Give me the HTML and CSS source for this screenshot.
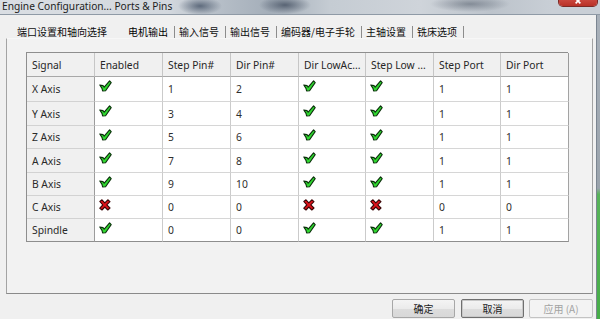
FILE: index.html
```html
<!DOCTYPE html>
<html lang="zh">
<head>
<meta charset="utf-8">
<title>Engine Configuration</title>
<link rel="stylesheet" href="styles.css">
</head>
<body>
<div class="window">
  <div class="titlebar">
    <span class="title">Engine Configuration... Ports &amp; Pins</span>
    <div class="close"><svg class="close-x" viewBox="0 0 10 10"><path d="M2 2 L8 8 M8 2 L2 8" stroke="#fff" stroke-width="2"/></svg></div>
  </div>
  <div class="main">
    <div class="dialog">
      <div class="tabs">
        <span class="tab first">端口设置和轴向选择</span>
        <span class="tab active">电机输出</span>
        <span class="tab">输入信号</span>
        <span class="tab">输出信号</span>
        <span class="tab">编码器/电子手轮</span>
        <span class="tab">主轴设置</span>
        <span class="tab">铣床选项</span>
      </div>
      <div class="panel">
        <div class="grid">
          <div class="hd">Signal</div><div class="hd">Enabled</div><div class="hd">Step Pin#</div><div class="hd">Dir Pin#</div><div class="hd">Dir LowAc...</div><div class="hd">Step Low ...</div><div class="hd">Step Port</div><div class="hd">Dir Port</div>

          <div class="sig">X Axis</div><div class="ic"><svg class="ok"><use href="#ok"/></svg></div><div class="c">1</div><div class="c">2</div><div class="ic"><svg class="ok"><use href="#ok"/></svg></div><div class="ic"><svg class="ok"><use href="#ok"/></svg></div><div class="c">1</div><div class="c">1</div>

          <div class="sig">Y Axis</div><div class="ic"><svg class="ok"><use href="#ok"/></svg></div><div class="c">3</div><div class="c">4</div><div class="ic"><svg class="ok"><use href="#ok"/></svg></div><div class="ic"><svg class="ok"><use href="#ok"/></svg></div><div class="c">1</div><div class="c">1</div>

          <div class="sig">Z Axis</div><div class="ic"><svg class="ok"><use href="#ok"/></svg></div><div class="c">5</div><div class="c">6</div><div class="ic"><svg class="ok"><use href="#ok"/></svg></div><div class="ic"><svg class="ok"><use href="#ok"/></svg></div><div class="c">1</div><div class="c">1</div>

          <div class="sig">A Axis</div><div class="ic"><svg class="ok"><use href="#ok"/></svg></div><div class="c">7</div><div class="c">8</div><div class="ic"><svg class="ok"><use href="#ok"/></svg></div><div class="ic"><svg class="ok"><use href="#ok"/></svg></div><div class="c">1</div><div class="c">1</div>

          <div class="sig">B Axis</div><div class="ic"><svg class="ok"><use href="#ok"/></svg></div><div class="c">9</div><div class="c">10</div><div class="ic"><svg class="ok"><use href="#ok"/></svg></div><div class="ic"><svg class="ok"><use href="#ok"/></svg></div><div class="c">1</div><div class="c">1</div>

          <div class="sig">C Axis</div><div class="ic"><svg class="no"><use href="#no"/></svg></div><div class="c">0</div><div class="c">0</div><div class="ic"><svg class="no"><use href="#no"/></svg></div><div class="ic"><svg class="no"><use href="#no"/></svg></div><div class="c">0</div><div class="c">0</div>

          <div class="sig">Spindle</div><div class="ic"><svg class="ok"><use href="#ok"/></svg></div><div class="c">0</div><div class="c">0</div><div class="ic"><svg class="ok"><use href="#ok"/></svg></div><div class="ic"><svg class="ok"><use href="#ok"/></svg></div><div class="c">1</div><div class="c">1</div>
        </div>
      </div>
      <div class="buttons">
        <button class="btn">确定</button>
        <button class="btn default">取消</button>
        <button class="btn disabled">应用 (A)</button>
      </div>
    </div>
    <div class="edge"></div>
  </div>
</div>

<svg class="defs" width="0" height="0">
  <defs>
    <symbol id="ok" viewBox="0 0 13 12">
      <path d="M0.8 5 L4 5.6 L5.2 7.2 L10.6 0.8 L12.2 2.6 L6.6 10.8 L3.6 11 L3 8.4 Z" fill="#2fd82f" stroke="#0a2e0a" stroke-width="1.1" stroke-linejoin="round"/>
    </symbol>
    <symbol id="no" viewBox="0 0 12 12">
      <path d="M0.8 2.4 L3 0.8 L5.8 3.8 L8.8 0.8 L11 2.6 L7.8 5.8 L11 9 L8.8 11 L5.8 8 L3 11 L0.8 9.2 L3.8 6 Z" fill="#e0121a" stroke="#3a0707" stroke-width="1.1" stroke-linejoin="round"/>
    </symbol>
  </defs>
</svg>
</body>
</html>
```

FILE: styles.css
```css
* { box-sizing: border-box; }

html, body {
  margin: 0;
  padding: 0;
}

body {
  width: 600px;
  height: 319px;
  overflow: hidden;
  background: #f0f0f0;
  font-family: "Noto Sans", "Noto Sans CJK SC", sans-serif;
  font-size: 10.3px;
  color: #2a2a2a;
}

.defs { position: absolute; width: 0; height: 0; }

.window {
  display: flex;
  flex-direction: column;
  height: 319px;
}

/* ---------- title bar ---------- */
.titlebar {
  position: relative;
  height: 15px;
  flex: none;
  border-bottom: 1px solid #8f9aa6;
  background:
    radial-gradient(ellipse 22px 9px at 200px 6px, rgba(70, 84, 104, .8), rgba(70, 84, 104, 0)),
    radial-gradient(ellipse 26px 9px at 285px 5px, rgba(60, 72, 90, .75), rgba(60, 72, 90, 0)),
    radial-gradient(ellipse 40px 8px at 470px 4px, rgba(80, 90, 104, .55), rgba(80, 90, 104, 0)),
    linear-gradient(90deg, #dadee3 0%, #d3d8de 28%, #b9c1ca 35%, #a4aeb9 45%, #c5ccd3 55%, #cfd4da 70%, #bcc3cb 82%, #c9cfd6 92%);
  overflow: hidden;
}

.title {
  display: block;
  padding-left: 2px;
  line-height: 12px;
  font-size: 10.2px;
  color: #1d1d1d;
  white-space: nowrap;
}

.close {
  position: absolute;
  right: 3px;
  top: 0;
  width: 38px;
  height: 6px;
  border-radius: 0 0 4px 4px;
  background: linear-gradient(#c9463d, #b93127);
  box-shadow: 0 0 0 1px #7d2a25;
  overflow: hidden;
  display: flex;
  justify-content: center;
  align-items: flex-end;
}

.close-x {
  width: 8px;
  height: 8px;
  margin-bottom: 1px;
}

/* ---------- main ---------- */
.main {
  flex: 1;
  display: flex;
}

.dialog {
  width: 596px;
  display: flex;
  flex-direction: column;
  background: #f0f0f0;
}

.edge {
  width: 4px;
  border-left: 1px solid #7b8591;
  background: linear-gradient(#a9b1ba 0%, #9aa3ac 57%, #58b45a 59%, #46ad48 100%);
}

/* ---------- tabs ---------- */
.tabs {
  height: 23px;
  display: flex;
  align-items: flex-end;
  padding-left: 17px;
  font-family: "Noto Sans CJK SC", sans-serif;
  font-size: 10px;
  color: #0e0e0e;
}

.tab {
  line-height: 12px;
  height: 12px;
  padding-right: 6px;
  margin-left: 4px;
  border-right: 1px solid #8c8c8c;
  white-space: nowrap;
}

.tab.first {
  margin-left: 0;
  padding-right: 0;
  border-right: none;
  margin-right: 21px;
}

.tab.active {
  margin-left: 0;
  color: #000;
}

/* ---------- panel ---------- */
.panel {
  height: 256px;
  margin: 0 3px 0 6px;
  border: 1px solid #a3a3a3;
  border-top-color: #f7f7f7;
  border-bottom: 1px solid #8a8a8a;
  background: #f2f2f2;
  padding: 13px 0 0 19px;
}

.grid {
  display: grid;
  grid-template-columns: 68px 68px 68px 68px 67px 68px 67px 68px;
  grid-template-rows: 24px 25px 24px 23px 24px 23px 23px 23px;
  width: 542px;
  border-left: 1px solid #8e8e8e;
  border-top: 1px solid #8e8e8e;
  background: #fff;
}

.grid > div {
  border-right: 1px solid #cbcbcb;
  border-bottom: 1px solid #d6d6d6;
  padding-left: 5px;
  display: flex;
  align-items: center;
  white-space: nowrap;
  overflow: hidden;
  color: #2e2e2e;
}

.grid > .hd {
  background: #f0f0f0;
  border-bottom-color: #a8a8a8;
  border-right-color: #c6c6c6;
  color: #262626;
}

.grid > .hd:nth-child(8) { border-right-color: #9a9a9a; }

.grid > .sig {
  background: #f0f0f0;
  border-right-color: #9c9c9c;
  border-bottom-color: #d2d2d2;
  color: #2a2a2a;
}

.grid > .c:nth-child(8n) { border-right-color: #a3a3a3; }

.grid > .ic {
  align-items: flex-start;
  padding-top: 3px;
  padding-left: 4px;
}

.grid > div:nth-last-child(-n+8) { border-bottom-color: #8e8e8e; }

.ok { width: 13px; height: 12px; }
.no { width: 12px; height: 12px; }

/* ---------- buttons ---------- */
.buttons {
  display: flex;
  justify-content: flex-end;
  padding: 5px 3px 0 0;
}

.btn {
  width: 63px;
  height: 19px;
  margin-left: 6px;
  padding: 0;
  font-family: "Noto Sans CJK SC", sans-serif;
  font-size: 10px;
  color: #1b1b1b;
  border: 1px solid #a7a7a7;
  border-radius: 2px;
  background: linear-gradient(#f4f4f4 0%, #ebebeb 50%, #dddddd 51%, #d8d8d8 100%);
}

.btn.default {
  border: 1px solid #6f6f6f;
  box-shadow: inset 0 0 0 1px #c8c8c8;
}

.btn.disabled {
  width: 64px;
  margin-left: 5px;
  color: #a2a2a2;
  border-color: #c3c3c3;
  background: #f3f3f3;
}
```
